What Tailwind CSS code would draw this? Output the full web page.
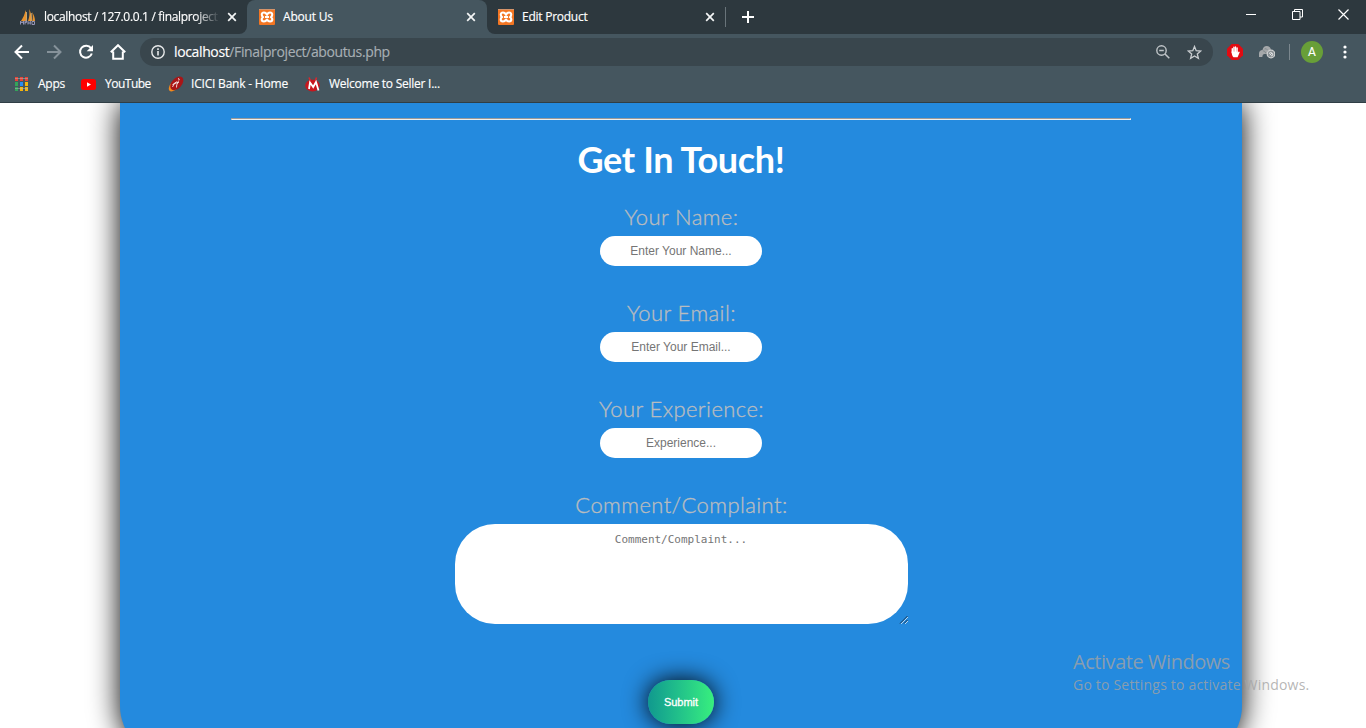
<!DOCTYPE html>
<html lang="en">
<head>
<meta charset="utf-8">
<title>About Us</title>
<script src="https://cdn.jsdelivr.net/npm/@tailwindcss/browser@4"></script>
</head>
<body class="relative flex h-[728px] w-[1366px] flex-col overflow-hidden bg-white font-['Open_Sans',sans-serif] text-xs text-white">
<svg class="hidden">
  <symbol id="xampp" viewBox="0 0 16 16"><rect width="16" height="16" rx="1" fill="#f37623"/><rect width="16" height="1" fill="#d5946a"/><path d="M8 5.800C7.300 4 6.200 3.500 5 3.500c-1.600 0-2.300 1-2.200 2.300 0 1.100.5 1.900 1.300 2.300-.8.400-1.400 1.200-1.400 2.200 0 1.400.8 2.200 2.200 2.200 1.300 0 2.400-.8 3.100-2 .7 1.200 1.800 2 3.100 2 1.400 0 2.200-.8 2.200-2.200 0-1-.6-1.800-1.400-2.200.8-.4 1.300-1.200 1.300-2.300.1-1.300-.6-2.300-2.200-2.300-1.200 0-2.300.5-3 2.300ZM6 8h4" fill="none" stroke="#fff" stroke-width="2.100" stroke-linejoin="round"/></symbol>
  <symbol id="close" viewBox="0 0 10 10"><path d="M1.200 1.200l7.600 7.600M8.800 1.200L1.200 8.800" stroke="#f4f6f6" stroke-width="1.700"/></symbol>
</svg>

<header class="shrink-0 [-webkit-text-stroke:0.15px_currentColor]">
  <!-- Tab strip -->
  <div class="flex h-[34px] bg-[#2d383e]">
    <div class="flex h-full w-[247px] bg-[#45565f]">
      <div class="flex w-full items-center rounded-br-lg bg-[#2d383e] pl-5">
        <svg class="size-4 shrink-0" viewBox="0 0 16 16"><path d="M5.500 1C5 5 3 9 1 12h5C6.500 8 6.500 4 5.500 1ZM9 0c1 4 .5 8-1 12h3.500C11.500 7 11 3 9 0ZM12 3c1 3 1 6 .3 9H15c0-3-1-6-3-9Z" fill="#e8932e"/><path d="M6.500 3v9M11.300 4v8" stroke="#f7cf8c" stroke-width=".7"/><path d="M.5 15.500V12l1.500 2 1.500-2v3.500M5 15.500V12h1.500v1.500H5M8 12v3.500M8 14h2M10.300 12v3.500M12 12.500h2.500v3H12Z" fill="none" stroke="#9695b6"/></svg>
        <span class="ml-2 w-[176px] whitespace-nowrap tracking-[-0.33px] [mask-image:linear-gradient(to_right,black_86%,transparent)]">localhost / 127.0.0.1 / finalproject</span>
        <svg class="ml-[7px] size-[10px] shrink-0"><use href="#close"/></svg>
      </div>
    </div>
    <div class="h-full w-[240px] bg-[#2d383e]">
      <div class="flex h-full items-center rounded-t-lg bg-[#45565f] pl-3">
        <svg class="size-4"><use href="#xampp"/></svg>
        <span class="ml-2 tracking-[-0.2px]">About Us</span>
        <svg class="ml-auto mr-[11px] size-[10px]"><use href="#close"/></svg>
      </div>
    </div>
    <div class="h-full grow bg-[#45565f]">
      <div class="flex h-full items-center rounded-bl-lg bg-[#2d383e] pl-[11px]">
        <svg class="size-4"><use href="#xampp"/></svg>
        <span class="ml-2 w-[183px] tracking-[-0.25px]">Edit Product</span>
        <svg class="size-[10px]"><use href="#close"/></svg>
        <i class="ml-[10px] h-5 w-px bg-[#69747a]"></i>
        <svg class="ml-4 size-3" viewBox="0 0 12 12"><path d="M0 6h12M6 0v12" stroke="#fff" stroke-width="2"/></svg>
        <div class="ml-auto flex h-full items-start pr-[17px] pt-[9px]">
          <svg class="h-[11px] w-[10px]" viewBox="0 0 10 11"><path d="M0 5.500h10" stroke="#fff"/></svg>
          <svg class="ml-9 size-[11px]" viewBox="0 0 11 11"><path d="M.5 2.500h7.500v8H.5ZM2.500 2.500V.5h8v7.500H8" fill="none" stroke="#fff"/></svg>
          <svg class="ml-[35px] size-[11px]" viewBox="0 0 11 11"><path d="M.5.5l10 10M10.500.5l-10 10" stroke="#fff" stroke-width="1.200"/></svg>
        </div>
      </div>
    </div>
  </div>

  <!-- Toolbar -->
  <div class="flex h-9 items-center bg-[#45565f] pl-[14px]">
    <svg class="size-4" viewBox="0 0 16 16"><path d="M15 8H2.500M8 1.500L1.500 8 8 14.500" fill="none" stroke="#fff" stroke-width="2"/></svg>
    <svg class="ml-4 size-4" viewBox="0 0 16 16"><path d="M1 8h12.500M8 1.500L14.500 8 8 14.500" fill="none" stroke="#86929a" stroke-width="2"/></svg>
    <svg class="ml-4 size-4" viewBox="0 0 16 16"><path d="M13 4.200A6 6 0 1 0 13.800 9.500" fill="none" stroke="#fff" stroke-width="2"/><path d="M15 1v6.300H8.700Z" fill="#fff"/></svg>
    <svg class="ml-4 size-4" viewBox="0 0 16 16"><path d="M.8 8.300L8 1.200l7.200 7.100M3.200 7.500v7.300h9.600V7.500" fill="none" stroke="#fff" stroke-width="2"/></svg>
    <div class="ml-[14px] flex h-7 w-[1073px] items-center rounded-full bg-[#39464d] pl-[11px] pr-[11px]">
      <svg class="size-[14px]" viewBox="0 0 14 14"><circle cx="7" cy="7" r="6.200" fill="none" stroke="#e7e9ea" stroke-width="1.400"/><path d="M7 6v4.500M7 3.300v1.700" stroke="#e7e9ea" stroke-width="1.600"/></svg>
      <span class="ml-[9px] whitespace-nowrap text-sm tracking-[-0.37px] text-[#a7afb4]"><span class="text-white">localhost</span>/Finalproject/aboutus.php</span>
      <svg class="ml-auto size-[14px]" viewBox="0 0 14 14"><circle cx="5.500" cy="5.500" r="4.700" fill="none" stroke="#c0c5c8" stroke-width="1.400"/><path d="M3.200 5.500h4.600M9 9l4.300 4.300" stroke="#c0c5c8" stroke-width="1.500"/></svg>
      <svg class="ml-[17px] size-[15px]" viewBox="0 0 15 15"><path d="M7.500 1.500l1.700 4.200 4.600.3-3.500 3 1.100 4.400-3.900-2.400-3.900 2.400L4.700 9 1.200 6l4.600-.3Z" fill="none" stroke="#c9cdd0" stroke-width="1.300"/></svg>
    </div>
    <svg class="ml-[14px] size-4" viewBox="0 0 16 16"><path d="M4.700 0h6.600L16 4.700v6.600L11.300 16H4.700L0 11.300V4.700Z" fill="#e10b12"/><path d="M5.300 8.500V4.800M6.900 7.500V3.300M8.500 7.500V2.900M10.100 8V4" stroke="#fff" stroke-width="1.400" stroke-linecap="round"/><path d="M4.600 7.500h6.200v1.300l1-1.300 1 .5-2.200 5.200H6.500C5.200 12 4.600 10 4.600 7.500Z" fill="#fff"/></svg>
    <svg class="ml-4 size-4" viewBox="0 0 16 16"><path d="M0 13V9.500C0 7.500 1.500 6 3.500 6 4 3.500 5.500 2 7.700 2c2.300 0 3.800 1.300 4.200 3.500L9 10H5.500c-1.300.3-2 1-2.200 3Z" fill="#a5a8aa"/><path d="M3.800 6.800Q6 6.500 7 9.500M5.500 5q2-1 3 1" stroke="#7a8488" stroke-width=".8" fill="none"/><circle cx="12" cy="10" r="3.800" fill="#8b9296" stroke="#cfd1d2" stroke-width="1.200"/><path d="M10 9.500q2-2 3.500 0T12 12M11 11l2-2" fill="none" stroke="#e2e3e4" stroke-width="1"/></svg>
    <i class="ml-[14px] h-4 w-px bg-[#7b878e]"></i>
    <span class="ml-[11px] flex size-[22px] items-center justify-center rounded-full bg-[#689f38] font-['Roboto',sans-serif] text-xs">A</span>
    <svg class="ml-5 h-[14px] w-1" viewBox="0 0 4 14"><g fill="#fff"><circle cx="2" cy="2" r="1.600"/><circle cx="2" cy="7" r="1.600"/><circle cx="2" cy="12" r="1.600"/></g></svg>
  </div>

  <!-- Bookmarks -->
  <div class="flex h-[33px] items-start border-b border-[#303e45] bg-[#45565f] pl-[15px] pt-[6px]">
    <div class="flex h-4 items-center whitespace-nowrap">
      <svg class="h-[14px] w-[13px]" viewBox="0 0 13 14"><g fill="#ea4335"><path d="M0 0h3v4H0ZM5 0h3v4H5ZM10 0h3v4h-3Z"/></g><path d="M0 5h3v4H0ZM0 10h3v4H0Z" fill="#34a45a"/><path d="M5 5h3v4H5Z" fill="#2b8cf2"/><path d="M10 5h3v4h-3ZM5 10h3v4H5ZM10 10h3v4h-3Z" fill="#f5b50d"/><path d="M0 1.500h13M0 11.500h13" stroke="#b5b9b8" stroke-width=".5"/></svg>
      <span class="ml-[10px] w-[43px] tracking-[-0.25px]">Apps</span>
      <svg class="h-[11px] w-[15px]" viewBox="0 0 15 11"><rect width="15" height="11" rx="2.500" fill="#f00"/><path d="M6 3.200v4.600l4-2.300Z" fill="#fff"/></svg>
      <span class="ml-[9px] w-[63px] tracking-[-0.5px]">YouTube</span>
      <svg class="size-4" viewBox="0 0 16 16"><ellipse cx="6.800" cy="9" rx="7.800" ry="4" transform="rotate(-48 6.800 9)" fill="#f38a1d"/><ellipse cx="8.800" cy="7.300" rx="8" ry="5" transform="rotate(-48 8.800 7.300)" fill="#a91517"/><path d="M10 2.500q2 0 .8 2M9.300 5.500Q6 6 4.500 11M10.500 5.500Q8 9 8.500 11.500M4.500 8.500L11 6" fill="none" stroke="#fff" stroke-width=".8"/></svg>
      <span class="ml-[7px] w-[114px] tracking-[-0.2px]">ICICI Bank - Home</span>
      <svg class="size-4" viewBox="0 0 16 16"><ellipse cx="7.500" cy="9.500" rx="7.300" ry="6" fill="#c7161d"/><path d="M4 1.500l1.500 3.500M11.500 1.500L10.300 5" stroke="#d9272d" stroke-width="1.600"/><path d="M4 13L5 6.500l3.200 4.500L11 6l2.500 8.500" fill="none" stroke="#fff" stroke-width="1.800"/></svg>
      <span class="ml-2 tracking-[-0.25px]">Welcome to Seller I...</span>
    </div>
  </div>
</header>

<main class="h-[625px] overflow-hidden">
  <div class="ml-[120px] flex h-[653px] w-[1122px] flex-col items-center rounded-b-[50px] bg-[#248ade] pt-[15px] shadow-[0_0_30px_#000]">
    <hr class="h-[2px] w-[900px] shrink-0 border border-t-[#9a9a9a] border-r-[#eee] border-b-[#eee] border-l-[#9a9a9a]">
    <h1 class="mt-[19px] h-10 whitespace-nowrap font-['Lato',sans-serif] text-[36px] font-bold leading-10 tracking-[-0.35px]">Get In Touch!</h1>
    <form class="-mt-0.5 flex flex-col items-center font-['Lato',sans-serif] text-[22px] font-light leading-8 text-[#b9bcbf]">
      <label class="mt-6 flex h-[72px] flex-col items-center"><span class="h-8 pl-px tracking-[0.42px] [-webkit-text-stroke:0.35px_currentColor]">Your Name:</span>
        <input class="mt-[3px] h-[30px] w-[162px] shrink-0 rounded-full bg-white text-center font-['Liberation_Sans',sans-serif] text-xs font-normal placeholder:text-[#757575]" placeholder="Enter Your Name..."></label>
      <label class="mt-6 flex h-[72px] flex-col items-center"><span class="h-8 pl-px tracking-[0.42px] [-webkit-text-stroke:0.35px_currentColor]">Your Email:</span>
        <input class="mt-[3px] h-[30px] w-[162px] shrink-0 rounded-full bg-white text-center font-['Liberation_Sans',sans-serif] text-xs font-normal placeholder:text-[#757575]" placeholder="Enter Your Email..."></label>
      <label class="mt-6 flex h-[72px] flex-col items-center"><span class="h-8 pl-px tracking-[0.42px] [-webkit-text-stroke:0.35px_currentColor]">Your Experience:</span>
        <input class="mt-[3px] h-[30px] w-[162px] shrink-0 rounded-full bg-white text-center font-['Liberation_Sans',sans-serif] text-xs font-normal placeholder:text-[#757575]" placeholder="Experience..."></label>
      <label class="relative mt-6 flex flex-col items-center"><span class="h-8 pl-px tracking-[0.42px] [-webkit-text-stroke:0.35px_currentColor]">Comment/Complaint:</span>
        <textarea class="mt-[3px] h-[100px] w-[453px] resize-none rounded-[40px] bg-white pt-[9px] text-center font-['DejaVu_Sans_Mono',monospace] text-[11px] font-normal leading-[14px] placeholder:text-[#757575]" placeholder="Comment/Complaint..."></textarea>
        <svg class="absolute bottom-0 right-0 size-[9px]" viewBox="0 0 9 9"><path d="M1 8.500L8.500 1M5 8.500L8.500 5" stroke="#173b5d"/><path d="M2 9L9 2M6 9l3-3" stroke="#dce9f4" stroke-width=".8"/></svg>
      </label>
      <button type="button" class="mt-14 h-11 w-[66px] rounded-full bg-linear-to-r from-[#11998e] to-[#38ef7d] font-['Liberation_Sans',sans-serif] text-[11px] font-normal leading-none text-white shadow-[0_0_25px_#000] [-webkit-text-stroke:0.3px_white]">Submit</button>
    </form>
  </div>
</main>

<!-- Watermark over the desktop -->
<div class="absolute left-[1073px] top-[649px] whitespace-nowrap text-[#a3a3a3]/80">
  <div class="text-[20px] leading-[26px] tracking-[-0.45px]">Activate Windows</div>
  <div class="text-sm leading-5 tracking-[0.2px]">Go to Settings to activate Windows.</div>
</div>
</body>
</html>
